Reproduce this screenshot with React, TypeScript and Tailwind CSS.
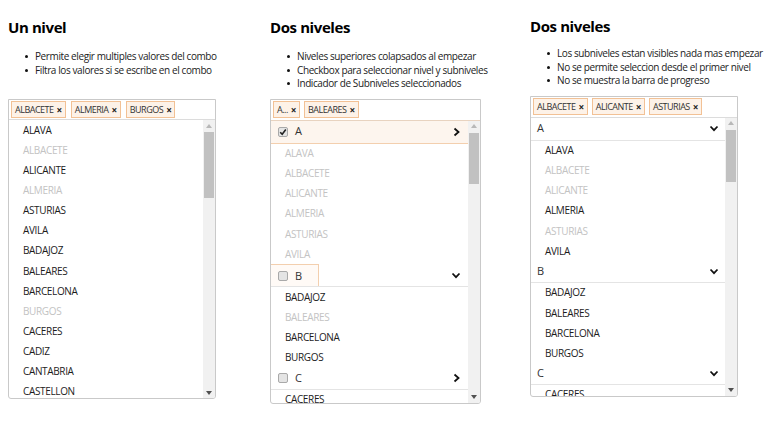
import React from "react";

const FONT = "font-['Open_Sans','Noto_Sans',sans-serif]";

function Tag({ label }: { label: string }) {
  return (
    <span className="flex items-center h-[17px] pl-[3px] pr-[3px] border border-[#f2c195] bg-[#fdf2e8] text-[9px] text-[#333] tracking-[-0.5px] leading-none">
      {label}
      <span className="ml-[3px] font-bold text-[10px] text-[#222] leading-none">×</span>
    </span>
  );
}

function ScrollBar({ thumbTop, thumbH }: { thumbTop: number; thumbH: number }) {
  return (
    <div className="w-[12px] bg-[#f1f1f1] flex flex-col shrink-0">
      <div className="h-[11px] flex items-center justify-center">
        <svg width="6" height="4" viewBox="0 0 6 4">
          <path d="M0 4 L3 0 L6 4 Z" fill="#b8b8b8" />
        </svg>
      </div>
      <div style={{ height: thumbTop }} />
      <div className="mx-[1px] bg-[#c1c1c1]" style={{ height: thumbH }} />
      <div className="flex-1" />
      <div className="h-[11px] flex items-center justify-center">
        <svg width="6" height="4" viewBox="0 0 6 4">
          <path d="M0 0 L3 4 L6 0 Z" fill="#505050" />
        </svg>
      </div>
    </div>
  );
}

function Item({ label, dim, indent = 14 }: { label: string; dim?: boolean; indent?: number }) {
  return (
    <div
      className={`h-[20.15px] flex items-center text-[10px] tracking-[-0.35px] shrink-0 ${dim ? "text-[#c3c3c3]" : "text-[#1c1c1c]"}`}
      style={{ paddingLeft: indent }}
    >
      {label}
    </div>
  );
}

function ChevronRight() {
  return (
    <svg width="7" height="10" viewBox="0 0 7 10">
      <path d="M1.5 1.5 L5.5 5 L1.5 8.5" fill="none" stroke="#111" strokeWidth="1.8" />
    </svg>
  );
}
function ChevronDown() {
  return (
    <svg width="10" height="7" viewBox="0 0 10 7">
      <path d="M1.5 1.5 L5 5.2 L8.5 1.5" fill="none" stroke="#111" strokeWidth="1.8" />
    </svg>
  );
}

function Check({ checked }: { checked?: boolean }) {
  return (
    <span className="w-[10px] h-[10px] rounded-[2px] border border-[#a9a9a9] bg-[#e4e4e4] flex items-center justify-center shrink-0">
      {checked && (
        <svg width="8" height="8" viewBox="0 0 8 8">
          <path d="M1.2 4.2 L3.2 6.2 L6.8 1.6" fill="none" stroke="#222" strokeWidth="1.6" />
        </svg>
      )}
    </span>
  );
}

function Bullets({ items }: { items: string[] }) {
  return (
    <div className="flex flex-col pl-[17px]">
      {items.map((t) => (
        <div key={t} className="flex items-center h-[13.5px] text-[10px] text-[#222] tracking-[-0.4px]">
          <span className="w-[3px] h-[3px] rounded-full bg-[#111] mr-[7px] shrink-0" />
          <span className="whitespace-nowrap">{t}</span>
        </div>
      ))}
    </div>
  );
}

function Title({ text }: { text: string }) {
  return <div className="text-[15px] font-bold text-black leading-[20px] tracking-[-0.4px]">{text}</div>;
}

function Col1() {
  const items: [string, boolean][] = [
    ["ALAVA", false],
    ["ALBACETE", true],
    ["ALICANTE", false],
    ["ALMERIA", true],
    ["ASTURIAS", false],
    ["AVILA", false],
    ["BADAJOZ", false],
    ["BALEARES", false],
    ["BARCELONA", false],
    ["BURGOS", true],
    ["CACERES", false],
    ["CADIZ", false],
    ["CANTABRIA", false],
    ["CASTELLON", false],
  ];
  return (
    <div className="w-[262px] shrink-0 flex flex-col">
      <div className="pt-[17px]">
        <Title text="Un nivel" />
      </div>
      <div className="mt-[13px]">
        <Bullets items={["Permite elegir multiples valores del combo", "Filtra los valores si se escribe en el combo"]} />
      </div>
      <div className="mt-[22px] w-[208px] h-[300px] border border-[#c9c9c9] rounded-b-[3px] flex flex-col overflow-hidden">
        <div className="h-[20px] flex items-center gap-[5px] px-[2px] border-b border-[#dcdcdc] shrink-0">
          <Tag label="ALBACETE" />
          <Tag label="ALMERIA" />
          <Tag label="BURGOS" />
        </div>
        <div className="flex flex-1 min-h-0">
          <div className="flex-1 flex flex-col overflow-hidden">
            {items.map(([l, d]) => (
              <Item key={l} label={l} dim={d} />
            ))}
          </div>
          <ScrollBar thumbTop={1} thumbH={66} />
        </div>
      </div>
    </div>
  );
}

function Col2() {
  return (
    <div className="w-[260px] shrink-0 flex flex-col">
      <div className="pt-[17px]">
        <Title text="Dos niveles" />
      </div>
      <div className="mt-[13px]">
        <Bullets
          items={[
            "Niveles superiores colapsados al empezar",
            "Checkbox para seleccionar nivel y subniveles",
            "Indicador de Subniveles seleccionados",
          ]}
        />
      </div>
      <div className="mt-[8px] w-[211px] h-[305px] border border-[#c9c9c9] rounded-b-[3px] flex flex-col overflow-hidden">
        <div className="h-[21px] flex items-center gap-[4px] px-[2px] border-b border-[#e8d3c0] shrink-0">
          <Tag label="A..." />
          <Tag label="BALEARES" />
        </div>
        <div className="flex flex-1 min-h-0">
          <div className="flex-1 flex flex-col overflow-hidden">
            <div className="h-[23px] shrink-0 flex items-center bg-[#fdf5ee] border-b border-[#f3cfae] pl-[7px] pr-[8px]">
              <Check checked />
              <span className="ml-[7px] text-[11px] text-[#333] flex-1">A</span>
              <ChevronRight />
            </div>
            {["ALAVA", "ALBACETE", "ALICANTE", "ALMERIA", "ASTURIAS", "AVILA"].map((l) => (
              <Item key={l} label={l} dim />
            ))}
            <div className="h-[23px] shrink-0 flex items-stretch border-b border-[#e4e4e4] pr-[7px]">
              <div className="w-[48px] border border-l-0 border-b-0 border-[#f3cfae] bg-[#fffaf6] flex items-center pl-[7px]">
                <Check />
                <span className="ml-[7px] text-[11px] text-[#333]">B</span>
              </div>
              <div className="flex-1" />
              <div className="flex items-center">
                <ChevronDown />
              </div>
            </div>
            <Item label="BADAJOZ" />
            <Item label="BALEARES" dim />
            <Item label="BARCELONA" />
            <Item label="BURGOS" />
            <div className="h-[22px] shrink-0 flex items-center border-b border-[#e4e4e4] pl-[7px] pr-[8px]">
              <Check />
              <span className="ml-[7px] text-[11px] text-[#333] flex-1">C</span>
              <ChevronRight />
            </div>
            <Item label="CACERES" />
          </div>
          <ScrollBar thumbTop={1} thumbH={51} />
        </div>
      </div>
    </div>
  );
}

function Col3() {
  return (
    <div className="w-[230px] shrink-0 flex flex-col">
      <div className="pt-[16px]">
        <Title text="Dos niveles" />
      </div>
      <div className="mt-[11px]">
        <Bullets
          items={[
            "Los subniveles estan visibles nada mas empezar",
            "No se permite seleccion desde el primer nivel",
            "No se muestra la barra de progreso",
          ]}
        />
      </div>
      <div className="mt-[8px] w-[208px] h-[301px] border border-[#c9c9c9] rounded-b-[3px] flex flex-col overflow-hidden">
        <div className="h-[21px] flex items-center gap-[4px] px-[2px] border-b border-[#dcdcdc] shrink-0">
          <Tag label="ALBACETE" />
          <Tag label="ALICANTE" />
          <Tag label="ASTURIAS" />
        </div>
        <div className="flex flex-1 min-h-0">
          <div className="flex-1 flex flex-col overflow-hidden">
            <div className="h-[23px] shrink-0 flex items-center border-b border-[#e4e4e4] pl-[6px] pr-[6px]">
              <span className="text-[11px] text-[#333] flex-1">A</span>
              <ChevronDown />
            </div>
            <Item label="ALAVA" />
            <Item label="ALBACETE" dim />
            <Item label="ALICANTE" dim />
            <Item label="ALMERIA" />
            <Item label="ASTURIAS" dim />
            <Item label="AVILA" />
            <div className="h-[21.5px] shrink-0 flex items-center border-b border-[#e4e4e4] pl-[6px] pr-[6px]">
              <span className="text-[11px] text-[#333] flex-1">B</span>
              <ChevronDown />
            </div>
            <Item label="BADAJOZ" />
            <Item label="BALEARES" />
            <Item label="BARCELONA" />
            <Item label="BURGOS" />
            <div className="h-[21.5px] shrink-0 flex items-center border-b border-[#e4e4e4] pl-[6px] pr-[6px]">
              <span className="text-[11px] text-[#333] flex-1">C</span>
              <ChevronDown />
            </div>
            <Item label="CACERES" />
          </div>
          <ScrollBar thumbTop={1} thumbH={52} />
        </div>
      </div>
    </div>
  );
}

export default function App() {
  return (
    <div className={`${FONT} w-[766px] h-[434px] bg-white flex pl-[8px] overflow-hidden`}>
      <Col1 />
      <Col2 />
      <Col3 />
    </div>
  );
}
